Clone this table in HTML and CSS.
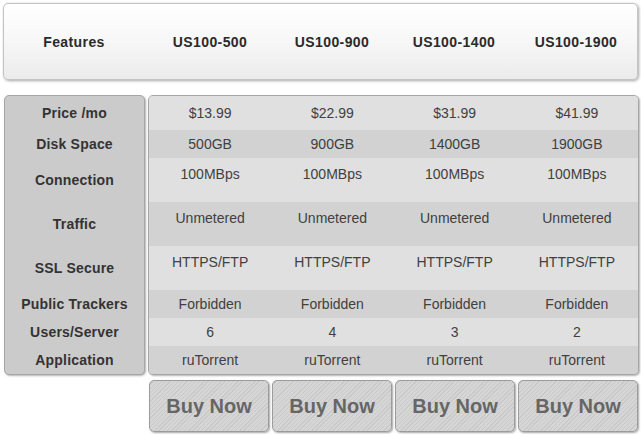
FILE: index.html
```html
<!DOCTYPE html>
<html>
<head>
<meta charset="utf-8">
<link rel="stylesheet" href="styles.css">
</head>
<body>
<div class="page">
  <div class="header">
    <div class="hcell first">Features</div>
    <div class="hcell">US100-500</div>
    <div class="hcell">US100-900</div>
    <div class="hcell">US100-1400</div>
    <div class="hcell">US100-1900</div>
  </div>
  <div class="body">
    <div class="features">
      <div class="frow r34">Price /mo</div>
      <div class="frow r28">Disk Space</div>
      <div class="frow r44">Connection</div>
      <div class="frow r44">Traffic</div>
      <div class="frow r44">SSL Secure</div>
      <div class="frow r28">Public Trackers</div>
      <div class="frow r28">Users/Server</div>
      <div class="frow r28">Application</div>
    </div>
    <div class="data">
      <div class="drow light r34 mid"><span>$13.99</span><span>$22.99</span><span>$31.99</span><span>$41.99</span></div>
      <div class="drow dark r28"><span>500GB</span><span>900GB</span><span>1400GB</span><span>1900GB</span></div>
      <div class="drow light r44 tall"><span>100MBps</span><span>100MBps</span><span>100MBps</span><span>100MBps</span></div>
      <div class="drow dark r44 tall"><span>Unmetered</span><span>Unmetered</span><span>Unmetered</span><span>Unmetered</span></div>
      <div class="drow light r44 tall"><span>HTTPS/FTP</span><span>HTTPS/FTP</span><span>HTTPS/FTP</span><span>HTTPS/FTP</span></div>
      <div class="drow dark r28"><span>Forbidden</span><span>Forbidden</span><span>Forbidden</span><span>Forbidden</span></div>
      <div class="drow light r28"><span>6</span><span>4</span><span>3</span><span>2</span></div>
      <div class="drow dark r28"><span>ruTorrent</span><span>ruTorrent</span><span>ruTorrent</span><span>ruTorrent</span></div>
    </div>
  </div>
  <div class="buttons">
    <div class="btn">Buy Now</div>
    <div class="btn">Buy Now</div>
    <div class="btn">Buy Now</div>
    <div class="btn">Buy Now</div>
  </div>
</div>
</body>
</html>
```
FILE: styles.css
```css
html, body {
  margin: 0;
  padding: 0;
  background: #ffffff;
}
.page {
  width: 641px;
  height: 435px;
  padding: 3px 3px 0 3px;
  box-sizing: border-box;
  font-family: "Liberation Sans", Arial, sans-serif;
}
.header {
  height: 77px;
  box-sizing: border-box;
  border: 1px solid #c4c4c4;
  border-radius: 5px;
  background: linear-gradient(to bottom, #ffffff 0%, #f7f7f7 50%, #ebebeb 100%);
  box-shadow: 1px 1px 3px rgba(0,0,0,0.35);
  display: grid;
  grid-template-columns: 145px repeat(4, 1fr);
  align-items: center;
}
.hcell {
  text-align: center;
  font-weight: bold;
  font-size: 14px;
  letter-spacing: 0.4px;
  color: #2a2a2a;
}
.hcell.first {
  padding-right: 5px;
}
.body {
  margin-top: 15px;
  display: grid;
  grid-template-columns: 141px 491px;
  column-gap: 3px;
  margin-left: 1px;
}
.features {
  border: 1px solid #a6a6a6;
  border-radius: 5px;
  background: #cbcbcb;
  box-shadow: 1px 1px 2px rgba(0,0,0,0.3);
  overflow: hidden;
}
.frow {
  display: flex;
  align-items: center;
  justify-content: center;
  font-weight: bold;
  font-size: 14px;
  letter-spacing: 0.2px;
  color: #333;
}
.r34 { height: 34px; }
.r28 { height: 28px; }
.r44 { height: 44px; }
.data {
  border: 1px solid #a6a6a6;
  border-radius: 5px;
  box-shadow: 1px 1px 2px rgba(0,0,0,0.3);
  overflow: hidden;
  background: #dfdfdf;
}
.drow {
  display: grid;
  grid-template-columns: repeat(4, 1fr);
  font-size: 14px;
  color: #404040;
  line-height: 28px;
  text-align: center;
  box-sizing: border-box;
}
.drow.mid {
  align-items: center;
}
.drow.tall {
  padding-top: 2px;
}
.light { background: #e0e0e0; }
.dark { background: #d2d2d2; }
.buttons {
  margin-top: 5px;
  margin-left: 146px;
  display: grid;
  grid-template-columns: repeat(4, 120px);
  column-gap: 3px;
}
.btn {
  height: 52px;
  box-sizing: border-box;
  border: 1px solid #9c9c9c;
  border-radius: 5px;
  background: repeating-linear-gradient(135deg, #d6d6d6 0px, #d6d6d6 2px, #c9c9c9 2px, #c9c9c9 3px);
  box-shadow: 1px 1px 2px rgba(0,0,0,0.35);
  display: flex;
  align-items: center;
  justify-content: center;
  font-weight: bold;
  font-size: 20px;
  color: #666666;
}
```
